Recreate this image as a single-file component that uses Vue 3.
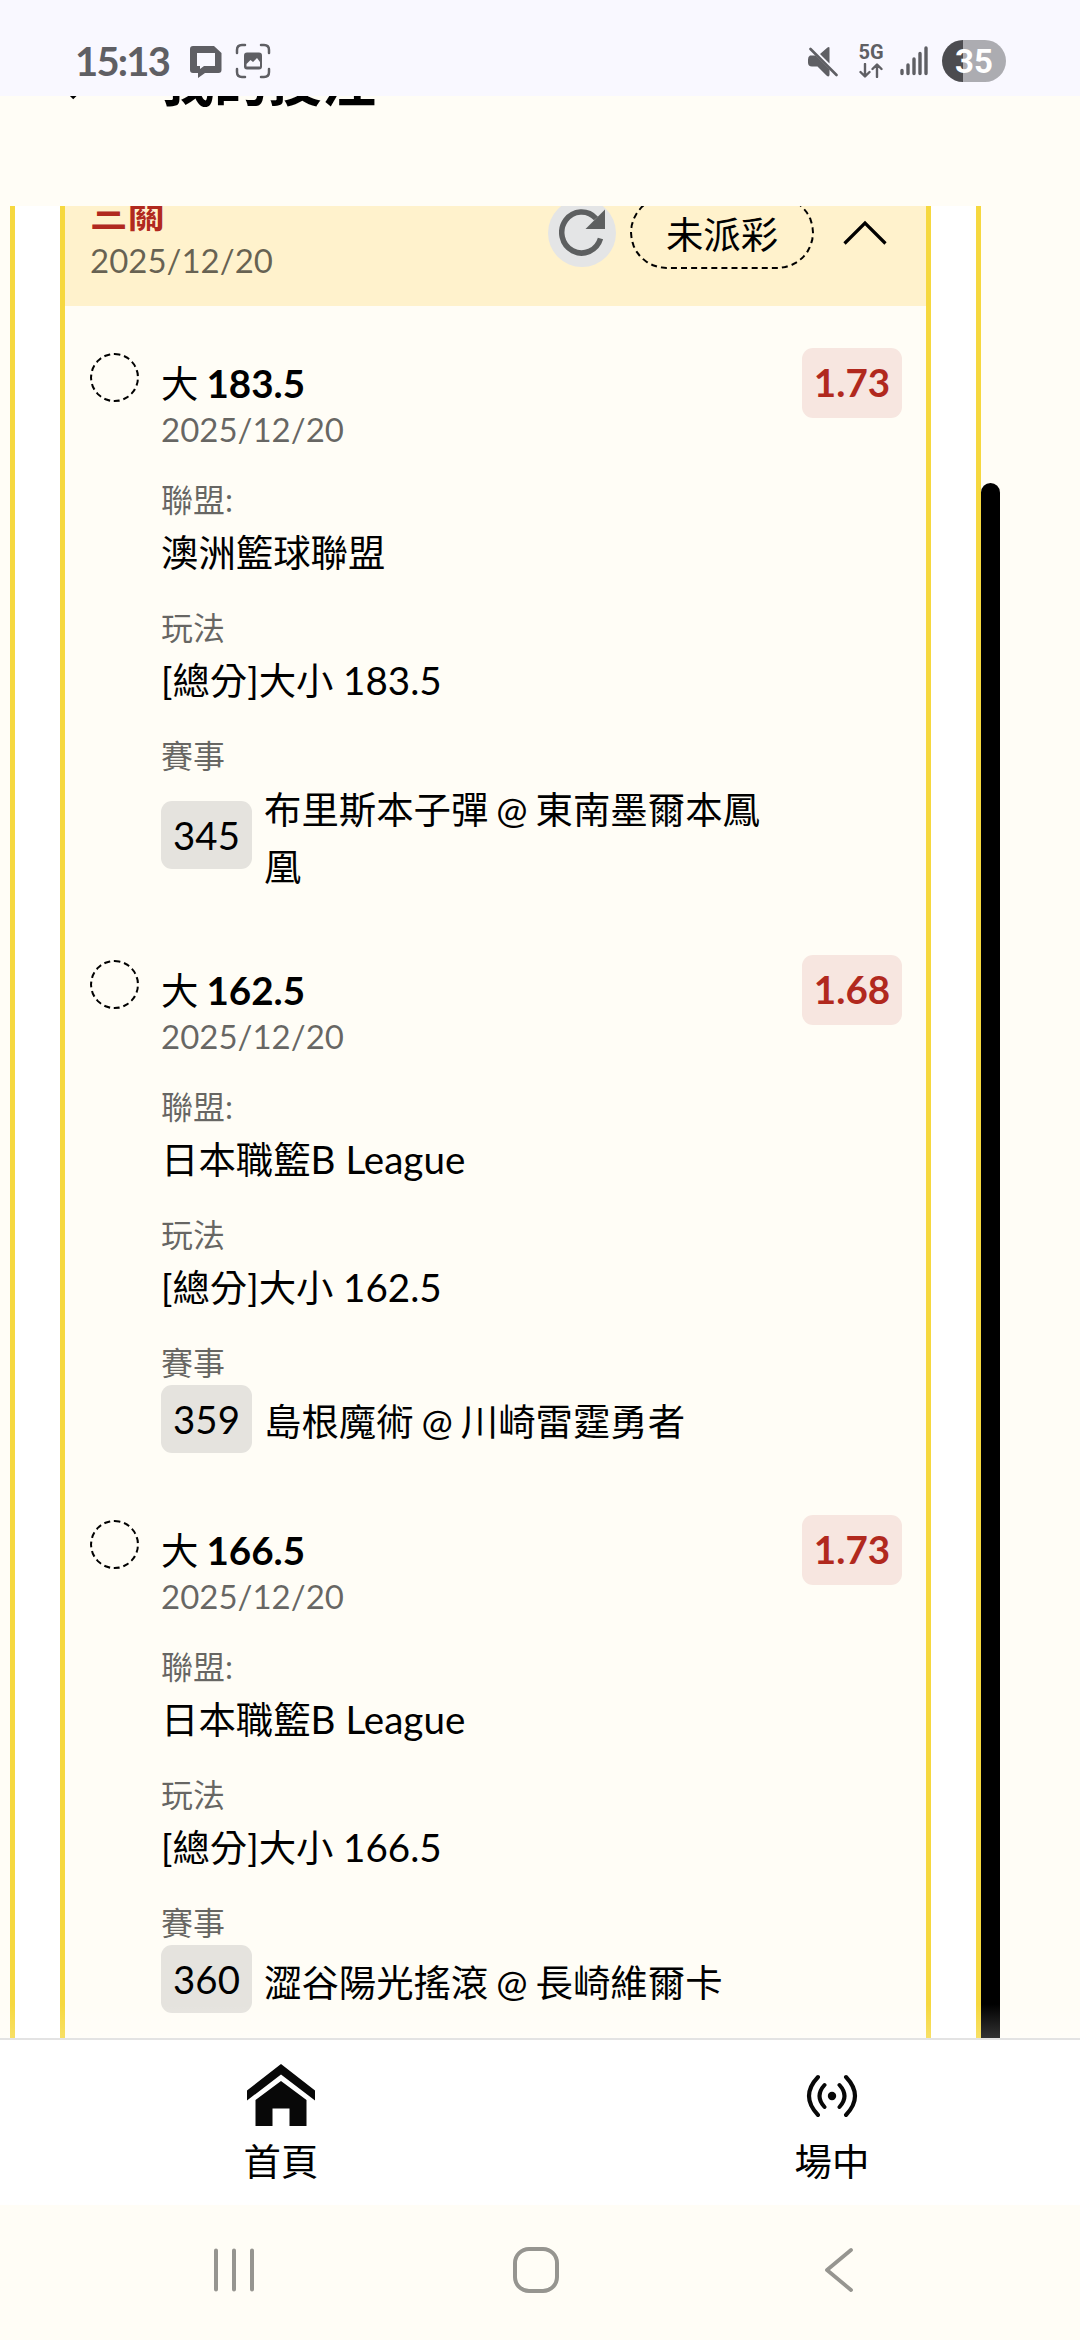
<script setup>
const legs = [
  {
    pick: '大', line: '183.5', date: '2025/12/20', odds: '1.73',
    league: '澳洲籃球聯盟', leagueSuffix: '', play: '[總分]大小', playLine: '183.5',
    code: '345', match: '布里斯本子彈 @ 東南墨爾本鳳凰',
  },
  {
    pick: '大', line: '162.5', date: '2025/12/20', odds: '1.68',
    league: '日本職籃', leagueSuffix: 'B League', play: '[總分]大小', playLine: '162.5',
    code: '359', match: '島根魔術 @ 川崎雷霆勇者',
  },
  {
    pick: '大', line: '166.5', date: '2025/12/20', odds: '1.73',
    league: '日本職籃', leagueSuffix: 'B League', play: '[總分]大小', playLine: '166.5',
    code: '360', match: '澀谷陽光搖滾 @ 長崎維爾卡',
  },
]
</script>

<template>
  <div class="screen">
    <header class="status">
      <div class="status-left">
        <span class="clock">15:13</span>
        <svg class="ic-chat" width="32" height="33" viewBox="0 0 32 33">
          <path fill="#5f5f64" fill-rule="evenodd" d="M3 1h21l7.500 7v17q0 3-3 3H15l-7 5v-5H3q-3 0-3-3V4q0-3 3-3zM7 8v13h3v3l4-3h11V8z" />
        </svg>
        <svg class="ic-capture" width="36" height="36" viewBox="0 0 36 36">
          <path fill="none" stroke="#5f5f64" stroke-width="2.500" stroke-linecap="round" d="M2 10V7q0-5 5-5h3M26 2h3q5 0 5 5v3M34 26v3q0 5-5 5h-3M10 34H7q-5 0-5-5v-3" />
          <rect x="9" y="9.500" width="18" height="17" rx="3" fill="#5f5f64" />
          <path fill="#f9f8ff" d="M11.500 21l4-4 2.500 2 4-4 3 4v4.500H11.500z" />
        </svg>
      </div>
      <div class="status-right">
        <svg width="30" height="31" viewBox="0 0 30 31">
          <path fill="#5f5f64" d="M2 9.500H7.500L21.500 23.500V29q-.5 2.500-3 .500L9.500 20.500H4q-4 0-4-4v-3q0-3 2-4zM12 8L19.500 1.500q2-1 2 .500v15.500z" />
          <path stroke="#5f5f64" stroke-width="2.600" stroke-linecap="round" d="M2.500 3l26 26" />
        </svg>
        <div class="net">
          <span class="net-label">5G</span>
          <svg width="24" height="15" viewBox="0 0 24 15">
            <path fill="none" stroke="#5f5f64" stroke-width="2.400" stroke-linecap="round" stroke-linejoin="round" d="M6 1v12M1.500 9L6 13.500 10.500 9M18 14V2M13.500 6L18 1.500 22.500 6" />
          </svg>
        </div>
        <svg class="ic-signal" width="28" height="30" viewBox="0 0 28 30">
          <path stroke="#5f5f64" stroke-width="3.400" stroke-linecap="round" d="M2 24.500v3M8 19v8.500M14 13v14.500M20 7.500v20M26 2v25.500" />
        </svg>
        <span class="battery">35</span>
      </div>
    </header>

    <div class="titlebar">
      <svg class="title-back" width="40" height="44" viewBox="0 0 40 44">
        <path fill="none" stroke="#000" stroke-width="5" d="M35 2L15 20.500l20 20" />
      </svg>
      <h1 class="title">我的投注</h1>
    </div>

    <main class="scroller">
      <div class="outer">
        <section class="ticket">
          <div class="ticket-head">
            <div class="ticket-info">
              <div class="ticket-name">三關</div>
              <div class="date head-date">2025/12/20</div>
            </div>
            <div class="refresh">
              <svg width="46" height="47" viewBox="0 0 46 47">
                <path fill="none" stroke="#5d5f60" stroke-width="5.500" d="M41.500 29.500A19.800 20.500 0 1 1 37 9.500" />
                <path fill="#5d5f60" d="M46 .500V20H26.500z" />
              </svg>
            </div>
            <div class="pill">未派彩</div>
            <svg class="chevron" width="44" height="26" viewBox="0 0 44 26">
              <path fill="none" stroke="#000" stroke-width="3.200" d="M1.500 23.500L22 3l20.500 20.500" />
            </svg>
          </div>

          <article v-for="leg in legs" :key="leg.code" class="leg">
            <span class="dot"></span>
            <div class="body">
              <div class="pick">{{ leg.pick }} <b>{{ leg.line }}</b></div>
              <div class="date">{{ leg.date }}</div>
              <div class="field">
                <div class="label">聯盟:</div>
                <div class="value">{{ leg.league }}<span class="latin">{{ leg.leagueSuffix }}</span></div>
              </div>
              <div class="field">
                <div class="label">玩法</div>
                <div class="value">{{ leg.play }} <span class="latin">{{ leg.playLine }}</span></div>
              </div>
              <div class="field">
                <div class="label">賽事</div>
                <div class="event">
                  <span class="code">{{ leg.code }}</span>
                  <span class="match">{{ leg.match }}</span>
                </div>
              </div>
            </div>
            <span class="odds">{{ leg.odds }}</span>
          </article>
        </section>
      </div>
      <div class="thumb"></div>
      <div class="fade"></div>
    </main>

    <nav class="tabs">
      <div class="tab tab-home">
        <svg width="68" height="62" viewBox="0 0 68 62">
          <path fill="#080808" d="M34 0l34 26.500v10L34 10.500 0 36.500v-10zM34 17l25.500 19v26H42.500V44.500h-17V62h-17V36z" />
        </svg>
        <span>首頁</span>
      </div>
      <div class="tab tab-live">
        <svg width="52" height="62" viewBox="0 0 52 62">
          <circle cx="26" cy="32" r="4.200" fill="#080808" />
          <path fill="none" stroke="#080808" stroke-width="4" stroke-linecap="round" d="M18.500 21Q8.500 32 18.500 43M33.500 21Q43.500 32 33.500 43M12 13Q-6 32 12 51M40 13Q58 32 40 51" />
        </svg>
        <span>場中</span>
      </div>
    </nav>

    <footer class="sysnav">
      <svg width="40" height="46" viewBox="0 0 40 46">
        <path stroke="#969590" stroke-width="4" stroke-linecap="round" d="M2 3.500v39M20 3.500v39M38 3.500v39" />
      </svg>
      <svg class="sys-home" width="46" height="46" viewBox="0 0 46 46">
        <rect x="2" y="2" width="42" height="42" rx="14" fill="none" stroke="#969590" stroke-width="4" />
      </svg>
      <svg class="sys-back" width="30" height="46" viewBox="0 0 30 46">
        <path fill="none" stroke="#969590" stroke-width="3.800" stroke-linecap="round" stroke-linejoin="round" d="M27 3L3 23l24 20" />
      </svg>
    </footer>
  </div>
</template>

<style>
body {
  margin: 0;
  background: #fffdf6;
}
</style>

<style scoped>
.screen {
  width: 1080px;
  height: 2340px;
  display: flex;
  flex-direction: column;
  overflow: hidden;
  background: #fffdf6;
  color: #000;
  font-family: Lato, "Noto Sans CJK TC", sans-serif;
  font-size: 37.4px;
  line-height: 57px;
}
.screen * {
  box-sizing: border-box;
}
svg {
  display: block;
  flex: none;
}
.status {
  flex: none;
  height: 96px;
  display: flex;
  justify-content: space-between;
  align-items: center;
  padding: 26px 74px 0 75px;
  background: #f9f8ff;
}
.status-left,
.status-right {
  display: flex;
  align-items: center;
}
.clock {
  width: 115px;
  font-size: 40px;
  font-weight: 700;
  line-height: 40px;
  letter-spacing: -1.8px;
  color: #5f5f64;
}
.ic-capture {
  margin-left: 13px;
}
.net {
  width: 26px;
  margin-left: 20px;
  display: flex;
  flex-direction: column;
  align-items: center;
  gap: 2px;
}
.net-label {
  font: 700 20px/17px Roboto, sans-serif;
  color: #5f5f64;
}
.ic-signal {
  margin: 0 14px 0 16px;
}
.battery {
  width: 64px;
  height: 42px;
  border-radius: 21px;
  background: linear-gradient(90deg, #4c4c50 33%, #acacb1 33%);
  color: #fff;
  font: 700 33px/44px Roboto, sans-serif;
  text-align: center;
}
.titlebar {
  flex: none;
  height: 110px;
  display: flex;
  align-items: flex-start;
  padding-left: 40px;
  overflow: hidden;
}
.title-back {
  margin-top: -39px;
}
.title {
  margin: -46px 0 0 80px;
  font-size: 54px;
  line-height: 64px;
  font-weight: 700;
}
.scroller {
  flex: none;
  height: 1832px;
  overflow: hidden;
  position: relative;
}
.outer {
  width: 971px;
  margin-left: 10px;
  padding: 0 45px;
  background: #fff;
  border: solid #f6d83f;
  border-width: 0 5px;
}
.ticket {
  height: 1900px;
  background: #fffdf6;
  border: solid #f6d83f;
  border-width: 0 5px;
}
.ticket-head {
  height: 147px;
  margin-top: -47px;
  padding: 0 39px 0 25px;
  display: flex;
  align-items: center;
  background: #fff2cc;
}
.ticket-info {
  flex: 1;
  padding-top: 4px;
}
.ticket-name {
  font-weight: 700;
  line-height: 50px;
  color: #b1291e;
}
.date {
  font-size: 33px;
  line-height: 42px;
  color: rgba(0, 0, 0, 0.6);
}
.head-date {
  padding-top: 1px;
  line-height: 41px;
}
.refresh {
  width: 68px;
  height: 68px;
  border-radius: 50%;
  display: flex;
  align-items: center;
  justify-content: center;
  background: #e4e5e6;
}
.pill {
  width: 184px;
  height: 73px;
  margin-left: 14px;
  border: 2px dashed #000;
  border-radius: 37px;
  line-height: 74px;
  text-align: center;
}
.chevron {
  margin-left: 29px;
}
.leg {
  display: flex;
  align-items: flex-start;
  padding: 42px 24px 20.6px 25px;
}
.dot {
  flex: none;
  width: 49px;
  height: 49px;
  margin-top: 5px;
  border: 2px dashed #000;
  border-radius: 50%;
}
.body {
  width: 624px;
  margin-left: 22px;
  padding-top: 7px;
}
.pick {
  word-spacing: -1.5px;
}
.pick b {
  font-size: 38.6px;
  font-weight: 700;
}
.body > .date {
  margin: -4px 0 28px;
}
.field + .field {
  margin-top: 27px;
}
.label {
  font-size: 32px;
  line-height: 44px;
  color: rgba(0, 0, 0, 0.6);
}
.value {
  padding-top: 2px;
  margin-bottom: -2px;
}
.latin {
  font-size: 38.6px;
}
.event {
  display: flex;
  align-items: center;
}
.code {
  flex: none;
  width: 91px;
  height: 68px;
  font-size: 38.4px;
  line-height: 68px;
  border-radius: 11px;
  text-align: center;
  background: #e5e3de;
}
.match {
  margin: 3px 0 -3px 12px;
  word-spacing: -1.6px;
}
.odds {
  width: 100px;
  height: 70px;
  margin-left: auto;
  border-radius: 11px;
  background: #f7e6e0;
  color: #b1291e;
  font-size: 38.6px;
  font-weight: 700;
  line-height: 69px;
  text-align: center;
}
.thumb {
  position: absolute;
  left: 981px;
  top: 277px;
  width: 19px;
  height: 1700px;
  border-radius: 10px 10px 0 0;
  background: #000;
}
.fade {
  position: absolute;
  left: 0;
  right: 0;
  bottom: 0;
  height: 34px;
  background: linear-gradient(rgba(255, 255, 255, 0), rgba(255, 255, 255, 0.2));
}
.tabs {
  flex: none;
  height: 167px;
  display: flex;
  border-top: 2px solid #e3e3e3;
  background: #fff;
}
.tab {
  width: 120px;
  display: flex;
  flex-direction: column;
  align-items: center;
  padding-top: 24px;
}
.tab span {
  margin-top: 7px;
}
.tab-home {
  margin-left: 221px;
}
.tab-live {
  margin-left: 431px;
}
.sysnav {
  flex: 1;
  display: flex;
  align-items: flex-start;
  padding: 42px 0 0 214px;
}
.sys-home {
  margin-left: 259px;
}
.sys-back {
  margin-left: 265px;
}
</style>
